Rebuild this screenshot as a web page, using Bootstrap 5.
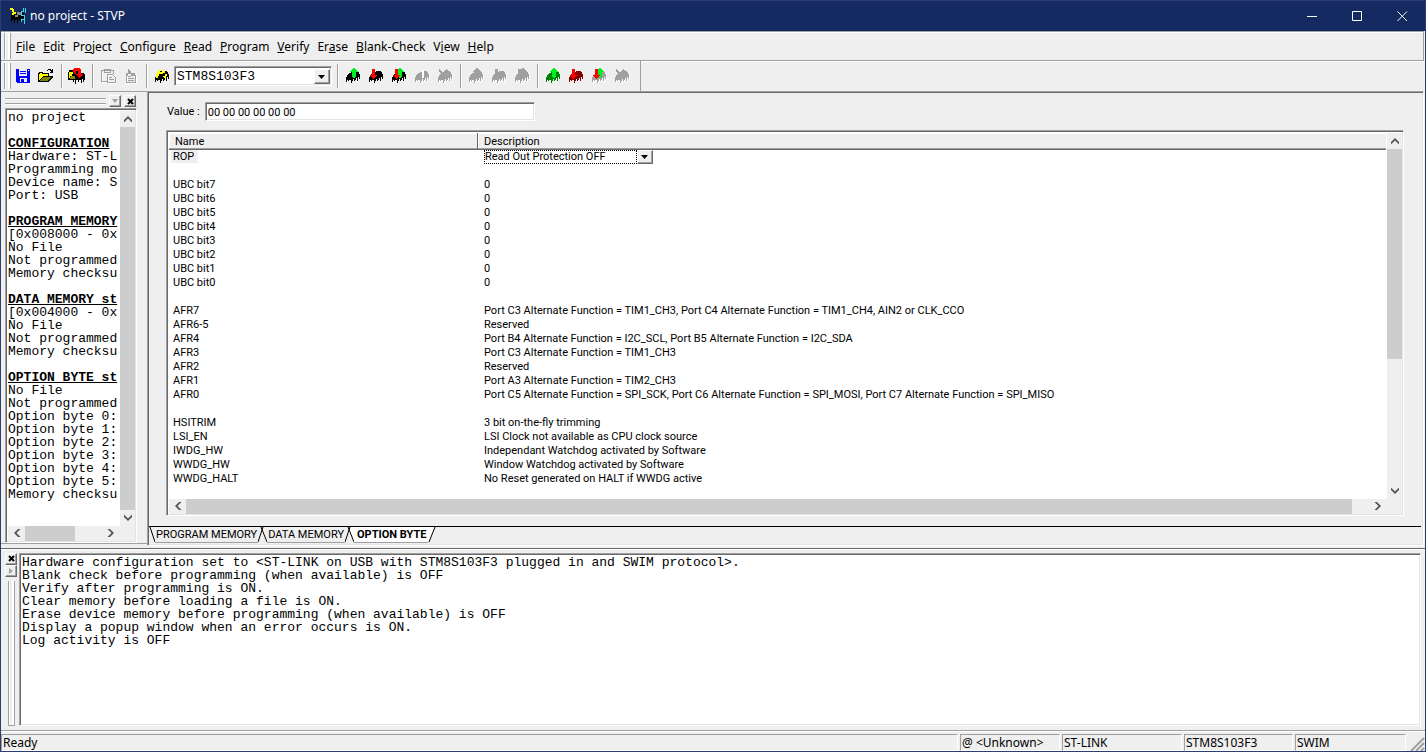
<!DOCTYPE html>
<html lang="en">
<head>
<meta charset="utf-8">
<meta name="viewport" content="width=device-width, initial-scale=1">
<title>no project - STVP</title>
<link href="https://cdn.jsdelivr.net/npm/bootstrap@5.3.0/dist/css/bootstrap.min.css" rel="stylesheet">
<style>
:root{--face:#efefef;--mid:#a0a0a0;--dark:#696969;--soft:#e3e3e3;--thumb:#cdcdcd;--navy:#142a60}
body{background:var(--face);color:#000;font:12px/16px "Noto Sans",sans-serif;overflow:hidden}
svg{display:block;flex:none}
.app{height:100vh;border:1px solid #2b3d73;border-top:0}
.titlebar{background:var(--navy);color:#fff;height:31px;border-top:1px solid #2b3d73;padding-left:8px}
.winbtn{width:45px;height:30px;border:0;padding:0;background:none;color:#fff;display:grid;place-items:center}
.menurow{height:30px;border-top:1px solid var(--mid);box-shadow:inset 0 1px #fff;border-bottom:1px solid var(--mid);border-right:1px solid var(--mid);margin-right:1px;padding-left:3px}
.menurow a{color:#000;text-decoration:none;white-space:nowrap}
.menurow nav{gap:8px;padding:2px 0 0 5px}
.toolrow{height:30px;box-shadow:inset 0 1px #fff;padding-left:3px}
.grip{width:7px;height:26px;border:solid var(--mid);border-width:0 1px;box-shadow:inset 1px 0 #fff,inset -2px 0 #fff}
.toolbtn{width:23px;height:24px;border:0;padding:0;background:none;display:grid;place-items:center;flex:none}
.toolsep{width:8px;height:24px;flex:none;display:flex;justify-content:center}
.toolsep::before{content:"";width:1px;background:var(--mid);box-shadow:1px 0 #fff}
.toolend{width:8px;border-right:1px solid var(--mid)}
.sunk{border:1px solid;border-color:var(--mid) #fff #fff var(--mid);box-shadow:inset 1px 1px var(--dark),inset -1px -1px var(--soft);padding:2px 1px 1px 2px;background:#fff}
.raised{background:var(--face);border:1px solid;border-color:#fff var(--dark) var(--dark) #fff;box-shadow:inset -1px -1px var(--mid)}
.mono{font-family:"Liberation Mono",monospace;font-size:13px;line-height:13px;white-space:pre}
select,input{appearance:none;border:0;border-radius:0;outline:0;background:none;color:#000;padding:0;min-width:0}
.devbox{width:158px;height:20px;margin:0 1px}
.devbox select{font-size:13px;line-height:16px}
.arrow{width:16px;display:grid;place-items:center;pointer-events:none;flex:none}
.workarea{flex:456 1 0;min-height:0}
.sidebar{width:146px;flex:none;padding:2px 10px 0 4px;margin-bottom:4px;border-top:1px solid var(--mid);border-bottom:1px solid var(--mid)}
.panehead{height:14px;gap:3px;padding-right:1px}
.hgrip{height:6px;border:solid var(--mid);border-width:1px 0;box-shadow:inset 0 1px #fff,0 1px #fff}
.tinybtn{width:12px;height:12px;padding:0;display:grid;place-items:center;flex:none}
.infotext{overflow:hidden;flex:1;min-width:0}
.infotext h2{font:bold 13px/13px "Liberation Mono",monospace;text-decoration:underline;margin:13px 0 0}
.vbar{width:15px;background:var(--face);flex:none;margin-left:1px}
.hbar{height:15px;background:var(--face);flex:none}
.endcap{width:15px;height:16px;border:0;padding:0;background:none;display:grid;place-items:center;flex:none}
.hbar .endcap{width:17px;height:15px}
.thumb{background:var(--thumb)}
.docarea{border:1px solid;border-color:var(--mid) #fff #fff var(--mid);box-shadow:inset 1px 1px var(--dark),inset -1px -1px var(--soft);margin-right:1px;margin-bottom:2px;padding:1px}
.ms{font-family:Roboto,Arial,sans-serif;font-size:11px;line-height:14px}
.valuerow{padding:9px 0 0 18px;gap:5px}
.valuebox{width:330px;height:19px}
.listbox{margin:9px 18px 10px 17px;min-height:0}
.opts{width:100%;table-layout:fixed;border-collapse:separate;border-spacing:0}
.opts th{font-weight:400;height:17px;background:var(--face);border-bottom:1px solid var(--dark);box-shadow:inset 0 -1px var(--mid),inset 1px 1px #fff;padding:1px 0 0 6px}
.opts th:first-child{width:309px;border-right:1px solid var(--dark)}
.opts td{height:14px;padding:0 0 0 4px;white-space:nowrap}
.opts td+td{padding-left:6px}
.picked{background:var(--face);padding:0 4px 0 2px;margin-left:-2px}
.ropbox{width:169px;height:14px}
.ropbox select{border:1px dotted #000;height:14px;line-height:12px;flex:1}
.tabstrip{border-top:1px solid #000;height:18px;margin-right:1px}
.tabstrip button{border:0;border-bottom:1px solid var(--mid);padding:0 1px;background:none;font:11px/15px Roboto,Arial,sans-serif;height:16px;white-space:nowrap}
.tabstrip .current{background:#fff;font-weight:700;padding:0 2px 0 3px}
.logarea{flex:173 1 0;min-height:0;border-top:1px solid var(--dark);box-shadow:inset 0 1px #fff;padding:4px;gap:2px}
.logside{width:12px;flex:none}
.vgrip{width:7px;border:solid var(--mid);border-width:0 1px 1px;box-shadow:inset 1px 0 #fff,inset -2px 0 #fff}
.statusbar{height:21px;border-top:1px solid var(--mid);box-shadow:inset 0 1px #fff;padding-top:3px;gap:2px}
.statusbar>span{border:1px solid;border-color:var(--mid) #fff #fff var(--mid);line-height:16px;padding-left:1px;height:17px;white-space:nowrap;overflow:hidden}
</style>
</head>
<body>
<svg width="0" height="0" class="position-absolute" aria-hidden="true">
  <defs>
    <path id="chip" d="M4 5h2V4h2V3h5v1h1v2h1v5h-1V9h-1v4h-1v-3h-1v2h-1v1H9v-2H8v2H7v2H6v-3H4v1H3v-1H2v2H1V9h1V7h1V6h1z"/>
    <path id="up" d="M7 9V4H5V3h1V2h1V1h1V0h2v1h1v1h1v1h1v1h-2v5h-1v1H8V9z"/>
    <path id="down" d="M4 1h3v6h2v1H8v1H7v1H6v1H5v-1H4V9H3V8H2V7h2z"/>
    <path id="cl" d="M0 5l4-4 4 4v2.500L4 3.500 0 7.500z"/>
  </defs>
</svg>
<div class="app d-flex flex-column">
  <header class="titlebar d-flex align-items-center">
    <svg width="18" height="16" viewBox="0 0 18 16" shape-rendering="crispEdges"><path fill="#000" d="M2 7h3V5h5V3h4v2h1v5h-1v2h-1v-2h-1v4h-1v-2H9v3H8v-3H6v3H5v-3H3v2H2z"/><path fill="#ff0" d="M1 0h3v1h1v3h2v2H5v1H3V5h1V4H3V2H1z"/><path fill="#888" d="M8 4h4v3H9v2H6V7h2z"/><path fill="none" stroke="#3de" d="M14.500 0v3h-2v4h3v4h-3v3m4-14v5m-1 6v5"/></svg>
    <span class="flex-grow-1" style="padding-left:3px">no project - STVP</span>
    <button class="winbtn" aria-label="Minimize"><svg width="11" height="11"><path d="M0 5.500h10" stroke="#fff"/></svg></button>
    <button class="winbtn" aria-label="Maximize"><svg width="11" height="11"><path d="M.5.5h9v9h-9z" stroke="#fff" fill="none"/></svg></button>
    <button class="winbtn" aria-label="Close"><svg width="11" height="11"><path d="M.5.5l9.500 9.500M10 .5L.5 10" stroke="#fff"/></svg></button>
  </header>
  <div class="menurow d-flex align-items-center">
    <span class="grip"></span>
    <nav class="d-flex">
      <a href="#"><u>F</u>ile</a><a href="#"><u>E</u>dit</a><a href="#">Pr<u>o</u>ject</a><a href="#"><u>C</u>onfigure</a><a href="#"><u>R</u>ead</a><a href="#"><u>P</u>rogram</a><a href="#"><u>V</u>erify</a><a href="#">Er<u>a</u>se</a><a href="#"><u>B</u>lank-Check</a><a href="#">V<u>i</u>ew</a><a href="#"><u>H</u>elp</a>
    </nav>
  </div>
  <div class="toolrow d-flex align-items-center" role="toolbar" aria-label="Tools">
    <span class="grip"></span>
    <button class="toolbtn" aria-label="Save"><svg width="16" height="16" viewBox="0 0 16 16" shape-rendering="crispEdges"><path fill="#00f" d="M1 1h14v14H2l-1-1z"/><path fill="#efefef" d="M4 1h8v7H4zM5 10h7v4H9v-3H6v3H5zM13 2h1v1h-1z"/><path fill="#00f" d="M5 3h6v1H5zM5 5h6v1H5z"/></svg></button>
    <button class="toolbtn" aria-label="Open"><svg width="16" height="16" viewBox="0 0 16 16" shape-rendering="crispEdges"><path d="M1 4h4v1h6v3h4v1l-4 5H0V5h1z"/><path fill="#ff0" d="M2 5h2v1h6v2H5l-3 4H1V6h1z"/><path fill="#808000" d="M5 9h8l-3 4H2z"/><path d="M9 2h1V1h3v1h1V1h1v4h-3V4h1V3h-1V2h-2v1H9z"/></svg></button>
    <span class="toolsep"></span>
    <button class="toolbtn" aria-label="Configure programmer"><svg width="18" height="16" viewBox="0 0 18 16" shape-rendering="crispEdges"><path d="M0 4h1V2h5v1h5v2h5v1h1v6h-1v2h-1v-3h-1v4h-1v-3h-2v2h-1v-2H8v4H7v-4H6v2H5v-2H0z"/><path fill="#ff0" d="M1 4h4v2H4v2H2v2H1z"/><path fill="#880" d="M3 8h4v3H2z"/><path fill="red" d="M5 1h1V0h6v1h1v5h2v1h-1v1h-1v1h-1v1h-1V9h-1V8H9V7H8V6h2V3H8v3H6V4H5z"/></svg></button>
    <span class="toolsep"></span>
    <button class="toolbtn" aria-label="Paste" disabled><svg width="16" height="16" viewBox="0 0 16 16" shape-rendering="crispEdges" fill="none"><path stroke="#fff" d="M2.500 3.500v11h4m2-7h6l2 2v6h-8z"/><path stroke="#a0a0a0" d="M6.500 13.500h-5v-11h12v3M4.500 4V1.500h6V4zM7.500 6.500h5l3 3v5h-8zM9 9.500h3M9 11.500h5"/></svg></button>
    <button class="toolbtn" aria-label="Copy" disabled><svg width="16" height="16" viewBox="0 0 16 16" shape-rendering="crispEdges" fill="none"><path stroke="#fff" d="M4.500 7v8.500h9V6"/><path fill="#a0a0a0" d="M5 1h1v1h1v1h1v2h4v2h1v8H3V5h2zM4 8v6h8V8H8V6H5v2z" fill-rule="evenodd"/><path stroke="#a0a0a0" d="M5 10.500h6M5 12.500h6M5 8.500h3"/></svg></button>
    <span class="toolsep"></span>
    <button class="toolbtn" aria-label="Device"><svg width="16" height="16" viewBox="0 0 16 16" shape-rendering="crispEdges"><use href="#chip"/><path fill="#ff0" d="M3 4h1V3h1V2h4v1h2v2H9v1H6v2H4v2H2V7h1zM9 8h2V6h2v2h-1v2h-2z"/><path d="M6 3h2v1H6zM5 6h2v2H5z"/></svg></button>
    <div class="devbox sunk d-flex mono"><select class="flex-grow-1 mono" aria-label="Device"><option>STM8S103F3</option></select><span class="arrow raised"><svg width="8" height="4"><path d="M0 0h7L3.500 4z"/></svg></span></div>
    <span class="toolsep"></span>
    <button class="toolbtn" aria-label="Read tab"><svg width="16" height="16" shape-rendering="crispEdges"><use href="#chip"/><use href="#up" fill="#0e2"/></svg></button>
    <button class="toolbtn" aria-label="Program tab"><svg width="16" height="16" shape-rendering="crispEdges"><use href="#chip"/><use href="#down" fill="red"/></svg></button>
    <button class="toolbtn" aria-label="Verify tab"><svg width="16" height="16" shape-rendering="crispEdges"><use href="#chip"/><use href="#up" fill="#0e2"/><use href="#down" fill="red"/></svg></button>
    <button class="toolbtn" aria-label="Blank check tab" disabled><svg width="16" height="16" shape-rendering="crispEdges"><use href="#chip" x="1" y="1" fill="#fff"/><use href="#chip" fill="#a0a0a0"/><path fill="#fff" d="M8 2h2v8H8z"/></svg></button>
    <button class="toolbtn" aria-label="Erase tab" disabled><svg width="16" height="16" shape-rendering="crispEdges"><use href="#chip" x="1" y="1" fill="#fff"/><use href="#chip" fill="#a0a0a0"/><path stroke="#a0a0a0" stroke-width="2" d="M2 2l8 7M10 2L3 9"/></svg></button>
    <span class="toolsep"></span>
    <button class="toolbtn" aria-label="Read sectors" disabled><svg width="16" height="16" shape-rendering="crispEdges"><use href="#chip" x="1" y="1" fill="#fff"/><use href="#chip" fill="#a0a0a0"/><use href="#up" fill="#a0a0a0"/></svg></button>
    <button class="toolbtn" aria-label="Program sectors" disabled><svg width="16" height="16" shape-rendering="crispEdges"><use href="#chip" x="1" y="1" fill="#fff"/><use href="#chip" fill="#a0a0a0"/><use href="#down" fill="#a0a0a0"/></svg></button>
    <button class="toolbtn" aria-label="Verify sectors" disabled><svg width="16" height="16" shape-rendering="crispEdges"><use href="#chip" x="1" y="1" fill="#fff"/><use href="#chip" fill="#a0a0a0"/><use href="#up" fill="#a0a0a0"/><use href="#down" fill="#a0a0a0"/></svg></button>
    <span class="toolsep"></span>
    <button class="toolbtn" aria-label="Read all"><svg width="16" height="16" shape-rendering="crispEdges"><use href="#chip" fill="#008000"/><use href="#up" fill="#0e2"/></svg></button>
    <button class="toolbtn" aria-label="Program all"><svg width="16" height="16" shape-rendering="crispEdges"><use href="#chip" fill="#800000"/><use href="#down" fill="red"/></svg></button>
    <button class="toolbtn" aria-label="Verify all"><svg width="16" height="16" shape-rendering="crispEdges"><use href="#chip" x="1" y="1" fill="#fff"/><use href="#chip" fill="#a0a0a0"/><use href="#up" fill="#0e2"/><use href="#down" fill="red"/></svg></button>
    <button class="toolbtn" aria-label="Erase all" disabled><svg width="16" height="16" shape-rendering="crispEdges"><use href="#chip" x="1" y="1" fill="#fff"/><use href="#chip" fill="#a0a0a0"/><path stroke="#a0a0a0" stroke-width="2" d="M2 2l8 7M10 2L3 9"/></svg></button>
    <span class="toolend align-self-stretch"></span>
  </div>

  <div class="workarea d-flex">
    <aside class="sidebar d-flex flex-column">
      <div class="panehead d-flex align-items-center">
        <span class="hgrip flex-grow-1"></span>
        <button class="tinybtn raised" aria-label="Collapse" disabled><svg width="6" height="4"><path fill="#a0a0a0" d="M0 0h6L3 4z"/></svg></button>
        <button class="tinybtn raised" aria-label="Close panel"><svg width="7" height="7"><path d="M1 1l5 5M6 1L1 6" stroke="#000" stroke-width="2"/></svg></button>
      </div>
      <div class="sunk d-flex flex-column flex-grow-1" style="min-height:0">
        <div class="d-flex flex-grow-1" style="min-height:0">
          <div class="infotext mono"><div>no project</div><h2>CONFIGURATION</h2><div>Hardware: ST-L</div><div>Programming mo</div><div>Device name: S</div><div>Port: USB</div><h2>PROGRAM MEMORY</h2><div>[0x008000 - 0x</div><div>No File</div><div>Not programmed</div><div>Memory checksu</div><h2>DATA MEMORY st</h2><div>[0x004000 - 0x</div><div>No File</div><div>Not programmed</div><div>Memory checksu</div><h2>OPTION BYTE st</h2><div>No File</div><div>Not programmed</div><div>Option byte 0:</div><div>Option byte 1:</div><div>Option byte 2:</div><div>Option byte 3:</div><div>Option byte 4:</div><div>Option byte 5:</div><div>Memory checksu</div></div>
          <div class="vbar d-flex flex-column"><button class="endcap" aria-label="Scroll up"><svg width="8" height="8" fill="#555"><use href="#cl"/></svg></button><div class="thumb flex-grow-1"></div><button class="endcap" aria-label="Scroll down"><svg width="8" height="8" fill="#555"><use href="#cl" transform="rotate(180 4 4)"/></svg></button></div>
        </div>
        <div class="hbar d-flex"><button class="endcap" aria-label="Scroll left"><svg width="8" height="8" fill="#555"><use href="#cl" transform="rotate(-90 4 4)"/></svg></button><div class="flex-grow-1"><div class="thumb h-100" style="width:65%"></div></div><button class="endcap" aria-label="Scroll right"><svg width="8" height="8" fill="#555"><use href="#cl" transform="rotate(90 4 4)"/></svg></button><span class="vbar"></span></div>
      </div>
    </aside>

    <main class="docarea ms flex-grow-1 d-flex flex-column" style="min-width:0">
      <div class="valuerow d-flex align-items-center"><label for="val">Value :</label><input id="val" class="valuebox sunk" value="00 00 00 00 00 00"></div>
      <div class="listbox sunk flex-grow-1 d-flex flex-column">
        <div class="d-flex flex-grow-1 overflow-hidden">
          <div class="flex-grow-1 overflow-hidden">
            <table class="opts">
              <thead><tr><th>Name</th><th>Description</th></tr></thead>
              <tbody>
                <tr><td><span class="picked">ROP</span></td><td><div class="ropbox d-flex"><select aria-label="ROP"><option>Read Out Protection OFF</option></select><span class="arrow raised"><svg width="8" height="4"><path d="M0 0h7L3.500 4z"/></svg></span></div></td></tr>
                <tr><td></td><td></td></tr>
                <tr><td>UBC bit7</td><td>0</td></tr>
                <tr><td>UBC bit6</td><td>0</td></tr>
                <tr><td>UBC bit5</td><td>0</td></tr>
                <tr><td>UBC bit4</td><td>0</td></tr>
                <tr><td>UBC bit3</td><td>0</td></tr>
                <tr><td>UBC bit2</td><td>0</td></tr>
                <tr><td>UBC bit1</td><td>0</td></tr>
                <tr><td>UBC bit0</td><td>0</td></tr>
                <tr><td></td><td></td></tr>
                <tr><td>AFR7</td><td>Port C3 Alternate Function = TIM1_CH3, Port C4 Alternate Function = TIM1_CH4, AIN2 or CLK_CCO</td></tr>
                <tr><td>AFR6-5</td><td>Reserved</td></tr>
                <tr><td>AFR4</td><td>Port B4 Alternate Function = I2C_SCL, Port B5 Alternate Function = I2C_SDA</td></tr>
                <tr><td>AFR3</td><td>Port C3 Alternate Function = TIM1_CH3</td></tr>
                <tr><td>AFR2</td><td>Reserved</td></tr>
                <tr><td>AFR1</td><td>Port A3 Alternate Function = TIM2_CH3</td></tr>
                <tr><td>AFR0</td><td>Port C5 Alternate Function = SPI_SCK, Port C6 Alternate Function = SPI_MOSI, Port C7 Alternate Function = SPI_MISO</td></tr>
                <tr><td></td><td></td></tr>
                <tr><td>HSITRIM</td><td>3 bit on-the-fly trimming</td></tr>
                <tr><td>LSI_EN</td><td>LSI Clock not available as CPU clock source</td></tr>
                <tr><td>IWDG_HW</td><td>Independant Watchdog activated by Software</td></tr>
                <tr><td>WWDG_HW</td><td>Window Watchdog activated by Software</td></tr>
                <tr><td>WWDG_HALT</td><td>No Reset generated on HALT if WWDG active</td></tr>
              </tbody>
            </table>
          </div>
          <div class="vbar d-flex flex-column"><button class="endcap" aria-label="Scroll up"><svg width="8" height="8" fill="#555"><use href="#cl"/></svg></button><div class="flex-grow-1"><div class="thumb" style="height:63%"></div></div><button class="endcap" aria-label="Scroll down"><svg width="8" height="8" fill="#555"><use href="#cl" transform="rotate(180 4 4)"/></svg></button></div>
        </div>
        <div class="hbar d-flex"><button class="endcap" aria-label="Scroll left"><svg width="8" height="8" fill="#555"><use href="#cl" transform="rotate(-90 4 4)"/></svg></button><div class="flex-grow-1"><div class="thumb h-100" style="width:98.600%"></div></div><button class="endcap" aria-label="Scroll right"><svg width="8" height="8" fill="#555"><use href="#cl" transform="rotate(90 4 4)"/></svg></button><span class="vbar"></span></div>
      </div>
      <div class="tabstrip d-flex">
        <svg width="6" height="16"><path d="M1 0l5 15" stroke="#000"/></svg>
        <button>PROGRAM MEMORY</button>
        <svg width="9" height="16"><path d="M0 15l5-15M3 0l6 15" stroke="#000"/></svg>
        <button>DATA MEMORY</button>
        <svg width="9" height="16"><path fill="#fff" d="M3 0h6v16z"/><path d="M0 15l5-15M3 0l6 15" stroke="#000"/></svg>
        <button class="current">OPTION BYTE</button>
        <svg width="8" height="16"><path fill="#fff" d="M0 0h6L0 16z"/><path d="M1 15l6-15" stroke="#000"/></svg>
      </div>
    </main>
  </div>

  <section class="logarea d-flex" aria-label="Log">
    <div class="logside d-flex flex-column align-items-center">
      <button class="tinybtn raised" aria-label="Close log"><svg width="7" height="7"><path d="M1 1l5 5M6 1L1 6" stroke="#000" stroke-width="2"/></svg></button>
      <button class="tinybtn raised" aria-label="Expand" disabled><svg width="4" height="6"><path fill="#a0a0a0" d="M0 0v6l4-3z"/></svg></button>
      <span class="vgrip flex-grow-1 mt-1"></span>
    </div>
    <div class="sunk mono flex-grow-1 overflow-hidden"><div>Hardware configuration set to &lt;ST-LINK on USB with STM8S103F3 plugged in and SWIM protocol&gt;.</div><div>Blank check before programming (when available) is OFF</div><div>Verify after programming is ON.</div><div>Clear memory before loading a file is ON.</div><div>Erase device memory before programming (when available) is OFF</div><div>Display a popup window when an error occurs is ON.</div><div>Log activity is OFF</div></div>
  </section>

  <footer class="statusbar d-flex">
    <span class="flex-grow-1">Ready</span><span style="width:100px">@ &lt;Unknown&gt;</span><span style="width:120px">ST-LINK</span><span style="width:109px">STM8S103F3</span><span style="width:111px">SWIM</span>
    <svg class="align-self-end" width="17" height="14"><path d="M3 14L16 1M8 14l8-8M13 14l3-3" stroke="#a0a0a0" stroke-width="2"/></svg>
  </footer>
</div>
<script src="https://cdn.jsdelivr.net/npm/bootstrap@5.3.0/dist/js/bootstrap.bundle.min.js"></script>
</body>
</html>
